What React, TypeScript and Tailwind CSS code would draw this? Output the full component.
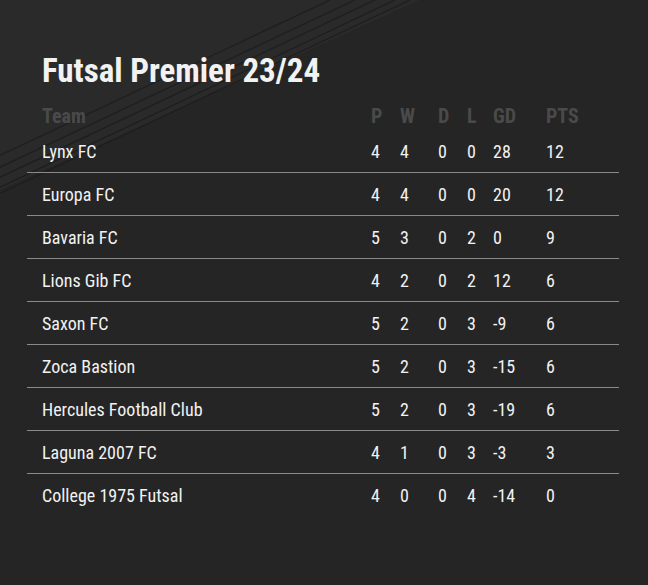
import type { ReactNode } from 'react';

type Row = { team: string; p: number; w: number; d: number; l: number; gd: number; pts: number };

const rows: Row[] = [
    { team: 'Lynx FC', p: 4, w: 4, d: 0, l: 0, gd: 28, pts: 12 },
    { team: 'Europa FC', p: 4, w: 4, d: 0, l: 0, gd: 20, pts: 12 },
    { team: 'Bavaria FC', p: 5, w: 3, d: 0, l: 2, gd: 0, pts: 9 },
    { team: 'Lions Gib FC', p: 4, w: 2, d: 0, l: 2, gd: 12, pts: 6 },
    { team: 'Saxon FC', p: 5, w: 2, d: 0, l: 3, gd: -9, pts: 6 },
    { team: 'Zoca Bastion', p: 5, w: 2, d: 0, l: 3, gd: -15, pts: 6 },
    { team: 'Hercules Football Club', p: 5, w: 2, d: 0, l: 3, gd: -19, pts: 6 },
    { team: 'Laguna 2007 FC', p: 4, w: 1, d: 0, l: 3, gd: -3, pts: 3 },
    { team: 'College 1975 Futsal', p: 4, w: 0, d: 0, l: 4, gd: -14, pts: 0 },
];

// ширины колонок подобраны по скриншоту
function Cells({ cells }: { cells: ReactNode[] }) {
    const widths = ['w-[29px]', 'w-[38px]', 'w-[29px]', 'w-[26px]', 'w-[53px]', 'w-[73px]'];
    return (
        <>
            {cells.map((c, i) => (
                <div key={i} className={`${widths[i]} shrink-0`}>
                    {c}
                </div>
            ))}
        </>
    );
}

function Stripes() {
    return (
        <svg className="absolute inset-0 pointer-events-none" width="648" height="585" viewBox="0 0 648 585">
            <polygon points="0,0 420,0 0,190" fill="#2a2a2a" />
            <g stroke="#1e1e1e" strokeWidth="1.2" fill="none">
                <line x1="330" y1="0" x2="-10" y2="160" />
                <line x1="355" y1="0" x2="-10" y2="172" />
                <line x1="375" y1="0" x2="-10" y2="182" />
                <line x1="395" y1="0" x2="-10" y2="192" />
                <line x1="410" y1="0" x2="-10" y2="198" />
            </g>
        </svg>
    );
}

export default function App() {
    return (
        <div
            className="relative w-[648px] h-[585px] overflow-hidden bg-[#252525] text-[#f2f2f2]"
            style={{ fontFamily: '"Roboto Condensed", Roboto, sans-serif', fontStretch: 'condensed' }}
        >
            <Stripes />
            <div className="relative pl-[27px] pr-[29px] pt-[52px]">
                <h1 className="pl-[15px] text-[33px] leading-[38px] font-bold">Futsal Premier 23/24</h1>

                <div className="mt-[12px] flex items-center h-[28px] pl-[15px] text-[20px] font-bold text-[#4a4a4a]">
                    <div className="flex-1">Team</div>
                    <Cells cells={['P', 'W', 'D', 'L', 'GD', 'PTS']} />
                </div>

                {rows.map((r, i) => (
                    <div
                        key={r.team}
                        className={`flex items-center h-[43px] pl-[15px] text-[18px] ${
                            i < rows.length - 1 ? 'border-b border-[#8a8a8a]' : ''
                        }`}
                    >
                        <div className="flex-1">{r.team}</div>
                        <Cells cells={[r.p, r.w, r.d, r.l, r.gd, r.pts]} />
                    </div>
                ))}
            </div>
        </div>
    );
}
